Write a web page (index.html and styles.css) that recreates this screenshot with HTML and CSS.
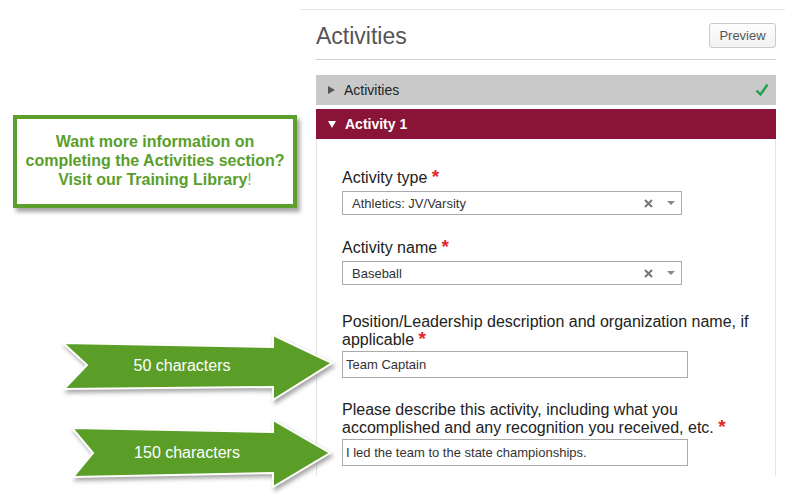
FILE: index.html
```html
<!DOCTYPE html>
<html lang="en">
<head>
    <meta charset="utf-8">
    <title>Activities</title>
    <link rel="stylesheet" href="styles.css">
</head>
<body>
<div class="page">
    <!-- left column: help notes -->
    <div class="side">
        <div class="callout">
            Want more information on completing the Activities section?
            Visit our Training Library<span class="bang">!</span>
        </div>

        <div class="arrow arrow-one">
            <svg width="280" height="74" viewBox="0 0 280 74">
                <polygon points="3,11 213,15 213,3 272,31 213,68 213,55 4,57 27,33"></polygon>
            </svg>
            <span class="arrow-label">50 characters</span>
        </div>
        <div class="arrow arrow-two">
            <svg width="270" height="74" viewBox="0 0 270 74">
                <polygon points="2,10 203,14 203,2 260,35 203,69 203,55 3,59 23,35"></polygon>
            </svg>
            <span class="arrow-label">150 characters</span>
        </div>
    </div>

    <!-- form -->
    <div class="main">
        <div class="head">
            <h1>Activities</h1>
            <button class="preview">Preview</button>
        </div>

        <div class="bar bar-done">
            <span class="tri-right"></span>
            <span class="bar-title">Activities</span>
            <svg class="check" width="14" height="14" viewBox="0 0 14 14">
                <path d="M1.5 7.5 L5.5 11.5 L12.5 1.5"></path>
            </svg>
        </div>
        <div class="bar bar-open">
            <span class="tri-down"></span>
            <span class="bar-title">Activity 1</span>
        </div>

        <div class="panel">
            <div class="field">
                <label>Activity type <span class="req">*</span></label>
                <div class="select">
                    <span class="select-value">Athletics: JV/Varsity</span>
                    <svg class="clear" width="9" height="9" viewBox="0 0 9 9">
                        <path d="M1 1 L8 8 M8 1 L1 8"></path>
                    </svg>
                    <span class="caret"></span>
                </div>
            </div>
            <div class="field">
                <label>Activity name <span class="req">*</span></label>
                <div class="select">
                    <span class="select-value">Baseball</span>
                    <svg class="clear" width="9" height="9" viewBox="0 0 9 9">
                        <path d="M1 1 L8 8 M8 1 L1 8"></path>
                    </svg>
                    <span class="caret"></span>
                </div>
            </div>
            <div class="field field-long">
                <label>Position/Leadership description and organization name, if applicable <span class="req">*</span></label>
                <input class="text" type="text" value="Team Captain">
            </div>
            <div class="field field-long">
                <label>Please describe this activity, including what you accomplished and any recognition you received, etc. <span class="req">*</span></label>
                <input class="text" type="text" value="I led the team to the state championships.">
            </div>
        </div>
    </div>
</div>
</body>
</html>
```
FILE: styles.css
```css
* {
    margin: 0;
    padding: 0;
    box-sizing: border-box;
}

body {
    background-color: #fff;
    font-family: "Liberation Sans", Arial, sans-serif;
    color: #222;
}

.page {
    display: flex;
    width: 785px;
    height: 500px;
    overflow: hidden;
}

/* 左边 */
.side {
    position: relative;
    width: 300px;
    flex-shrink: 0;
}

.callout {
    width: 284px;
    margin: 115px 0 0 13px;
    padding: 13px 4px 15px;
    border: 4px solid #5c9f2c;
    box-shadow: 3px 4px 4px rgba(0, 0, 0, 0.35);
    text-align: center;
    font-size: 16px;
    font-weight: bold;
    line-height: 19px;
    color: #5a9e2a;
}

.bang {
    font-weight: normal;
    color: #7cb455;
}

/* 箭头 */
.arrow {
    position: absolute;
    z-index: 2;
}

.arrow svg {
    display: block;
    overflow: visible;
    filter: drop-shadow(2px 3px 2px rgba(0, 0, 0, 0.35));
}

.arrow polygon {
    fill: #5a9e28;
    stroke: #fff;
    stroke-width: 2;
    stroke-linejoin: miter;
}

.arrow-one {
    left: 60px;
    top: 332px;
}

.arrow-two {
    left: 70px;
    top: 418px;
}

.arrow-label {
    position: absolute;
    left: 0;
    top: 25px;
    width: 244px;
    text-align: center;
    font-size: 16px;
    line-height: 18px;
    color: #fff;
}

.arrow-two .arrow-label {
    top: 26px;
    width: 234px;
}

/* 右边表单 */
.main {
    flex: 1;
    margin-top: 9px;
    padding: 0 9px 0 16px;
    border-top: 1px solid #e6e6e6;
}

.head {
    display: flex;
    align-items: center;
    justify-content: space-between;
    height: 50px;
    border-bottom: 1px solid #d0d0d0;
    margin-bottom: 15px;
}

.head h1 {
    margin-top: 4px;
    font-size: 23px;
    font-weight: normal;
    line-height: 27px;
    color: #555;
}

.preview {
    width: 67px;
    height: 25px;
    margin-top: 1px;
    border: 1px solid #cacaca;
    border-radius: 3px;
    background: linear-gradient(#fdfdfd, #f1f1f1);
    font-family: inherit;
    font-size: 13px;
    color: #555;
}

.bar {
    display: flex;
    align-items: center;
    height: 30px;
    padding-left: 12px;
    font-size: 14px;
}

.bar-done {
    background-color: #c9c9c9;
    color: #222;
    margin-bottom: 4px;
}

.bar-open {
    background-color: #8a1437;
    color: #fff;
    font-weight: bold;
}

.bar-title {
    margin-left: 9px;
}

.tri-right {
    width: 0;
    height: 0;
    border-left: 7px solid #555;
    border-top: 4px solid transparent;
    border-bottom: 4px solid transparent;
}

.tri-down {
    width: 0;
    height: 0;
    border-top: 7px solid #fff;
    border-left: 4px solid transparent;
    border-right: 4px solid transparent;
}

.check {
    margin-left: auto;
    margin-right: 7px;
}

.check path {
    fill: none;
    stroke: #1fa04a;
    stroke-width: 2.4;
}

.panel {
    height: 337px;
    padding: 30px 0 0 25px;
    border-left: 1px solid #e4e4e4;
    border-right: 1px solid #e4e4e4;
}

.field {
    width: 420px;
    margin-bottom: 24px;
}

.field label {
    display: block;
    font-size: 16px;
    line-height: 17px;
    color: #222;
    margin-bottom: 5px;
}

/* 两行的标题 */
.field-long {
    padding-top: 4px;
    margin-bottom: 19px;
}

.field-long label {
    line-height: 18px;
    margin-bottom: 2px;
}

.req {
    color: #e0262d;
    font-size: 19px;
    line-height: 0;
    font-weight: bold;
}

.select {
    display: flex;
    align-items: center;
    width: 340px;
    height: 24px;
    padding: 0 6px 0 9px;
    border: 1px solid #aaa;
    font-size: 13px;
    color: #333;
}

.select-value {
    flex: 1;
}

.clear path {
    fill: none;
    stroke: #777;
    stroke-width: 2;
}

.caret {
    width: 0;
    height: 0;
    margin-left: 14px;
    border-top: 4px solid #888;
    border-left: 4px solid transparent;
    border-right: 4px solid transparent;
}

.text {
    display: block;
    width: 346px;
    height: 27px;
    padding: 0 3px;
    border: 1px solid #aaa;
    font-family: inherit;
    font-size: 13px;
    color: #333;
    outline: none;
}
```
